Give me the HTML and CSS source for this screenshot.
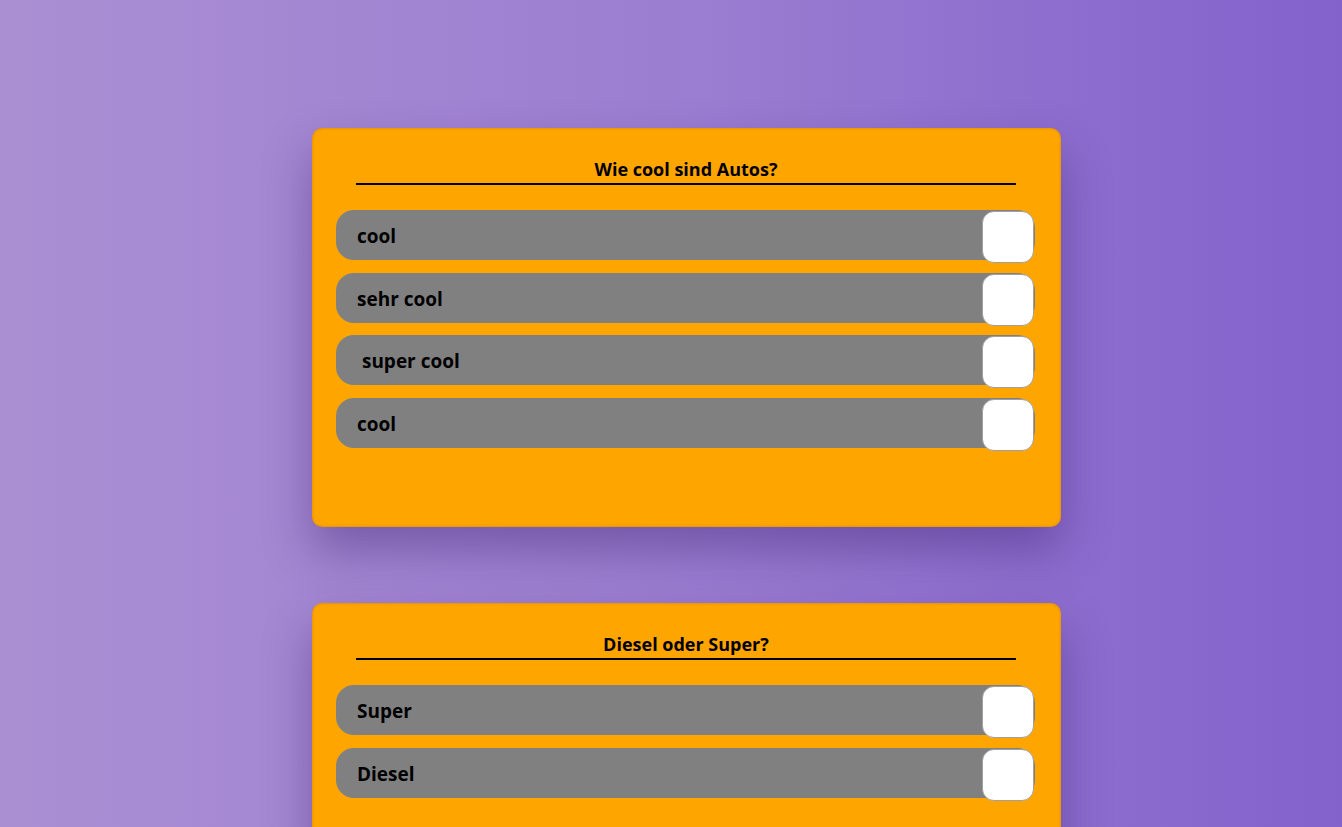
FILE: index.html
```html
<!DOCTYPE html>
<html lang="de">
<head>
<meta charset="utf-8">
<title>Umfrage</title>
<link rel="stylesheet" href="styles.css">
</head>
<body>
<main class="page">
  <section class="card">
    <h2 class="title">Wie cool sind Autos?</h2>
    <div class="options">
      <label class="option"><span class="label">cool</span><input type="checkbox" class="box"></label>
      <label class="option"><span class="label">sehr cool</span><input type="checkbox" class="box"></label>
      <label class="option"><span class="label">&nbsp;super cool</span><input type="checkbox" class="box"></label>
      <label class="option"><span class="label">cool</span><input type="checkbox" class="box"></label>
    </div>
  </section>
  <section class="card">
    <h2 class="title">Diesel oder Super?</h2>
    <div class="options">
      <label class="option"><span class="label">Super</span><input type="checkbox" class="box"></label>
      <label class="option"><span class="label">Diesel</span><input type="checkbox" class="box"></label>
    </div>
  </section>
</main>
</body>
</html>
```
FILE: styles.css
```css
html, body {
  margin: 0;
  padding: 0;
  height: 100%;
  overflow: hidden;
}
body {
  background: linear-gradient(to right, #ab8fd3 0%, #9c7ed1 50%, #8362cc 100%);
  font-family: "Open Sans", "Noto Sans", sans-serif;
  color: #000;
}
.page {
  display: flex;
  flex-direction: column;
  gap: 76px;
  padding-top: 128px;
  padding-left: 312px;
}
.card {
  box-sizing: border-box;
  width: 749px;
  height: 399px;
  flex-shrink: 0;
  background: #ffa500;
  border-radius: 10px;
  padding: 29px 26px 0 24px;
  box-shadow: inset 0 0 3px rgba(120, 60, 0, 0.35), 0 24px 48px rgba(50, 20, 100, 0.38);
}
.title {
  margin: 0 19px 0 20px;
  padding-bottom: 1px;
  border-bottom: 2px solid #000;
  font-size: 18px;
  font-weight: 700;
  text-align: center;
  line-height: 25px;
}
.options {
  display: flex;
  flex-direction: column;
  gap: 12.67px;
  margin-top: 25px;
}
.option {
  display: flex;
  align-items: flex-start;
  justify-content: space-between;
  height: 50px;
  background: #808080;
  border-radius: 18px;
}
.label {
  padding-left: 21px;
  font-size: 19px;
  font-weight: 700;
  line-height: 52px;
  white-space: pre;
}
.box {
  appearance: none;
  -webkit-appearance: none;
  box-sizing: border-box;
  margin: 1px 1px 0 0;
  width: 52px;
  height: 52px;
  background: #fff;
  border: 1px solid #a0a0a0;
  border-radius: 12px;
}
```
